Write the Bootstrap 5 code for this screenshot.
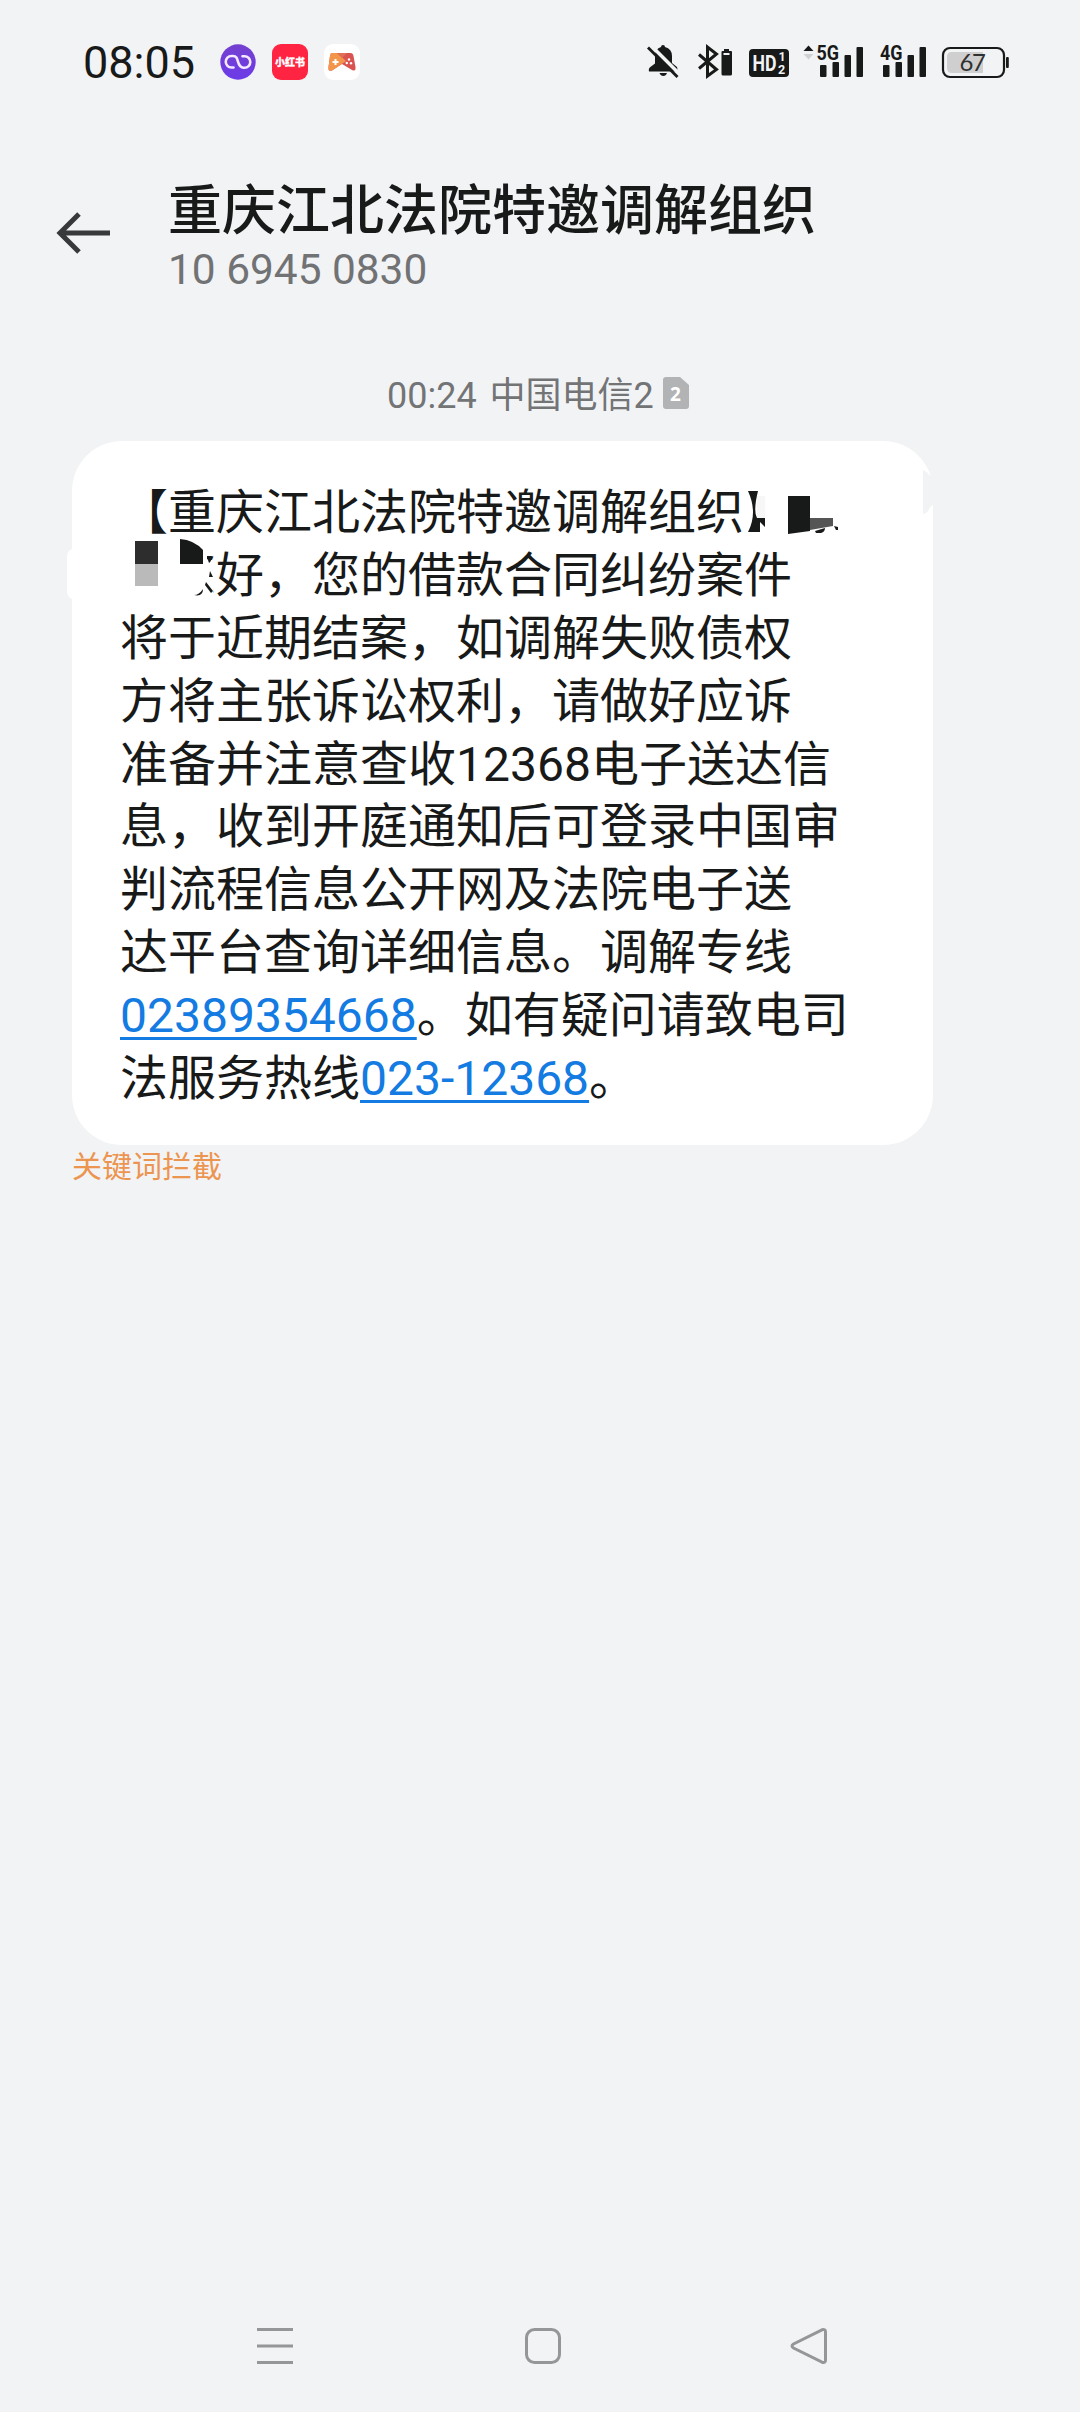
<!DOCTYPE html>
<html lang="zh-CN">
<head>
<meta charset="utf-8">
<meta name="viewport" content="width=device-width, initial-scale=1">
<title>短信</title>
<link href="https://cdn.jsdelivr.net/npm/bootstrap@5.3.0/dist/css/bootstrap.min.css" rel="stylesheet">
<style>
  body { background: #f2f3f5; color: #181919; font-family: Roboto, "Noto Sans CJK SC", sans-serif; }
  .phone { height: 2412px; width: 1080px; overflow: hidden; }
  svg { display: block; flex: none; overflow: visible; }
  .status-bar { height: 124px; padding-left: 83px; padding-right: 69px; }
  .clock { font-size: 45px; line-height: 126px; width: 137px; white-space: nowrap; padding-top: 1px; }
  .app-icons { gap: 16px; }
  .chat-head { height: 196px; padding: 50px 0 0 56px; }
  .back { margin-top: 35px; margin-right: 56px; }
  .sender { font-size: 54px; line-height: 76px; font-weight: 500; margin: 0; white-space: nowrap; }
  .number { font-size: 42.4px; line-height: 40px; color: #717274; }
  .stamp { height: 121px; padding-top: 55px; padding-left: 387px; font-size: 36px; line-height: 42px; color: #737476; white-space: nowrap; }
  .sim { margin: 2px 0 0 9px; }
  .bubble { width: 861px; height: 704px; margin-left: 72px; padding: 41px 0 0 48px; background: #fff; border-radius: 50px; font-size: 48px; line-height: 62.9px; }
  .bubble p { margin: 0; white-space: nowrap; height: 62.9px; }
  .bubble a { color: #137be2; text-decoration-thickness: 3px; text-underline-offset: 5px; }
  .mosaic { left: -6px; top: 0; }
  .notice { margin-left: 72px; font-size: 30px; line-height: 44px; color: #ec9550; }
  .nav-keys { height: 133px; padding-left: 255px; padding-right: 251px; }
</style>
</head>
<body>
<div class="phone d-flex flex-column">
  <header class="status-bar d-flex align-items-center">
    <div class="clock">08:05</div>
    <div class="app-icons d-flex">
      <svg width="36" height="36" viewBox="0 0 36 36"><defs><linearGradient id="pu" x1="0" y1="0" x2="0" y2="1"><stop offset="0" stop-color="#7440cf"/><stop offset="1" stop-color="#6c3be8"/></linearGradient></defs><circle cx="18" cy="18" r="17.7" fill="url(#pu)"/><path d="M13.500 23.500H11.500A5.700 5.700 0 0 1 11.500 12H13C16.500 12 17 14 18 17.700S20 23.800 23.500 23.800H24.500A5.800 5.800 0 0 0 24.500 12.200H22.500" fill="none" stroke="#f4e9ff" stroke-width="2.600" stroke-linecap="round"/></svg>
      <svg width="36" height="36" viewBox="0 0 36 36"><rect width="36" height="36" rx="9" fill="#fe2442"/><text x="18" y="22" text-anchor="middle" font-family="Noto Sans CJK SC" font-size="10" font-weight="900" fill="#fff" stroke="#fff" stroke-width=".3">小红书</text></svg>
      <svg width="36" height="36" viewBox="0 0 36 36"><rect width="36" height="36" rx="9" fill="#fff"/><path d="M8 9H26.500Q29 9 29.500 12L31.500 23Q32 28 28 26L18 20 8 26.500Q4 28 4.500 23L6 12Q6.500 9 8 9Z" fill="#d95450"/><path d="M8 9H13L22 17 8 26.500Q4 28 4.500 23L6 12Q6.500 9 8 9Z" fill="#f3964c"/><path d="M13 9H23L18 14Z" fill="#e06f55"/><path d="M11.500 15v6M8.500 18h6" stroke="#fff" stroke-width="2"/><g fill="#fff"><circle cx="25" cy="15.500" r="1.200"/><circle cx="22.800" cy="19" r="1.200"/><circle cx="27" cy="19.300" r="1.200"/></g></svg>
    </div>
    <svg class="ms-auto" width="365" height="48" viewBox="646 38 365 48" fill="#181919">
      <g><path d="M649 71.500q-1-3 2-5l4-3V56q0-7 6-9 0-2 2-2t2 2q7 2 7 9v7l5 4q1 2 0 4.500Z"/><path d="M659.500 73h7.500q-1 3-3.700 3t-3.800-3Z"/><path d="M650.500 45l30 30" stroke="#f2f3f5" stroke-width="3.500"/><path d="M648 47.500l29.500 29.500" stroke="#181919" stroke-width="2.900"/></g>
      <path d="M699 54.500L716.500 69.500 707.500 76V47L716.500 54 699 68.500" fill="none" stroke="#181919" stroke-width="3"/>
      <path d="M724 49h5v2h2q1 0 1 1v22q0 1.500-1.500 1.500h-7.500q-1.500 0-1.500-1.500V52q0-1 1-1h1.500Z"/><rect x="723.500" y="53" width="6" height="2" fill="#f2f3f5"/>
      <rect x="749" y="49" width="40" height="28" rx="4"/>
      <g fill="#f2f3f5" font-family="Roboto" font-weight="700"><text x="752.500" y="71" font-size="22" textLength="24" lengthAdjust="spacingAndGlyphs">HD</text><text x="778.500" y="61" font-size="12.500">1</text><text x="778" y="73.500" font-size="12.500">2</text></g>
      <path d="M803.500 51l5-5.500 5 5.500Z"/><path d="M803.500 54l5 5.500 5-5.500Z" fill="#d0d1d2"/>
      <g font-family="Roboto" font-weight="700" font-size="21"><text x="816.500" y="60" textLength="22.500" lengthAdjust="spacingAndGlyphs">5G</text><text x="880" y="60" textLength="22.500" lengthAdjust="spacingAndGlyphs">4G</text></g>
      <rect x="820" y="65" width="6.500" height="12" rx="1"/><rect x="832.500" y="62" width="6.500" height="15" rx="1"/><rect x="844.500" y="55" width="6.500" height="22" rx="1"/><rect x="856.500" y="47" width="6.500" height="30" rx="1"/>
      <rect x="883" y="65" width="6.500" height="12" rx="1"/><rect x="895.500" y="62" width="6.500" height="15" rx="1"/><rect x="907.500" y="55" width="6.500" height="22" rx="1"/><rect x="919.500" y="47" width="6.500" height="30" rx="1"/>
      <rect x="943" y="48" width="61" height="29" rx="7" fill="none" stroke="#181919" stroke-width="2.200"/><path d="M952 52h31v21h-31q-5 0-5-5V57q0-5 5-5Z" fill="#cfcfd0"/><rect x="1006" y="57" width="2.800" height="11" rx="1"/>
      <text x="972" y="71.300" text-anchor="middle" font-family="Lato" font-size="24" fill="#303132" letter-spacing="-1.500">67</text>
    </svg>
  </header>

  <section class="chat-head d-flex align-items-start">
    <svg class="back" width="56" height="48" viewBox="0 0 56 48" fill="none" stroke="#38393a" stroke-width="5"><path d="M54 24H4M23 5L4 24l19 19"/></svg>
    <div>
      <h1 class="sender">重庆江北法院特邀调解组织</h1>
      <div class="number">10 6945 0830</div>
    </div>
  </section>

  <div class="stamp d-flex">
    <span>00:24&nbsp;</span><span class="ms-1">中国电信2</span>
    <svg class="sim" width="26" height="32" viewBox="0 0 26 32"><path d="M3 0h14l9 8v21q0 3-3 3H3q-3 0-3-3V3Q0 0 3 0Z" fill="#b2b3b5"/><text x="12.500" y="23.500" text-anchor="middle" font-family="Open Sans" font-size="19" font-weight="700" fill="#fff">2</text></svg>
  </div>

  <main>
    <div class="bubble position-relative">
      <p>【重庆江北法院特邀调解组织】</p>
      <p>　您好，您的借款合同纠纷案件</p>
      <p>将于近期结案，如调解失败债权</p>
      <p>方将主张诉讼权利，请做好应诉</p>
      <p>准备并注意查收12368电子送达信</p>
      <p>息，收到开庭通知后可登录中国审</p>
      <p>判流程信息公开网及法院电子送</p>
      <p>达平台查询详细信息。调解专线</p>
      <p><a href="#">02389354668</a>。如有疑问请致电司</p>
      <p>法服务热线<a href="#">023-12368</a>。</p>
      <!-- Privacy mosaic over the recipient's name -->
      <svg class="mosaic position-absolute" width="872" height="200" viewBox="66 441 872 200">
        <path d="M72 549q-5 2-5 8v34q0 6 5 8Z" fill="#fff"/>
        <path d="M166 538H213V555H207V560H213V604H166Z" fill="#fff"/>
        <path d="M207 557h5q-1 5-3 6ZM210 571l3 6h-4ZM206 582l7 9-2 2-6-8ZM203 589q0 8-9 6 5 0 9-6Z" fill="#181919"/>
        <path d="M135 541h23v23h-23Z" fill="#2d2d2e"/><path d="M135 564h23v22h-23Z" fill="#bababa"/>
        <path d="M180 539q14 1 23 11v14h-23Z" fill="#181919"/>
        <path d="M745 486h40v52h-40Z" fill="#fff"/>
        <path d="M757 496h8v22h-8Z" fill="#f7f7f7"/>
        <path d="M748 491h10q-5 20-1 27h8v9l-5-5v10h-12q10-19 0-41Z" fill="#181919"/>
        <path d="M788 496h22v35l-22 3Z" fill="#181919"/><path d="M810 518h23v8l-23 4Z" fill="#555"/>
        <path d="M815 531l10-3q0 4-4 5l-5 0Zm19-5l4 1v3l-2 0Z" fill="#181919"/>
        <path d="M923 470q5 2 7 6l4-4v53h-1q0-3 0-20-3 1-5 6-2 3-5 3Z" fill="#f2f3f5"/>
      </svg>
    </div>
    <div class="notice">关键词拦截</div>
  </main>

  <nav class="nav-keys d-flex justify-content-between align-items-center mt-auto">
    <svg width="40" height="40" viewBox="0 0 40 40" stroke="#949698" stroke-width="3"><path d="M2 3.500h36M2 20h36M2 36.500h36"/></svg>
    <svg width="40" height="40" viewBox="-1 0 40 40" fill="none" stroke="#949698" stroke-width="3"><rect x="3.500" y="3.500" width="33" height="33" rx="8"/></svg>
    <svg width="40" height="40" viewBox="0 0 40 40" fill="none" stroke="#949698" stroke-width="3"><path d="M33 3.800L4.500 18q-3 2 0 4L33 36.200q3.500 1 3.500-2V5.800q0-3-3.500-2Z"/></svg>
  </nav>
</div>
<script src="https://cdn.jsdelivr.net/npm/bootstrap@5.3.0/dist/js/bootstrap.bundle.min.js"></script>
</body>
</html>
